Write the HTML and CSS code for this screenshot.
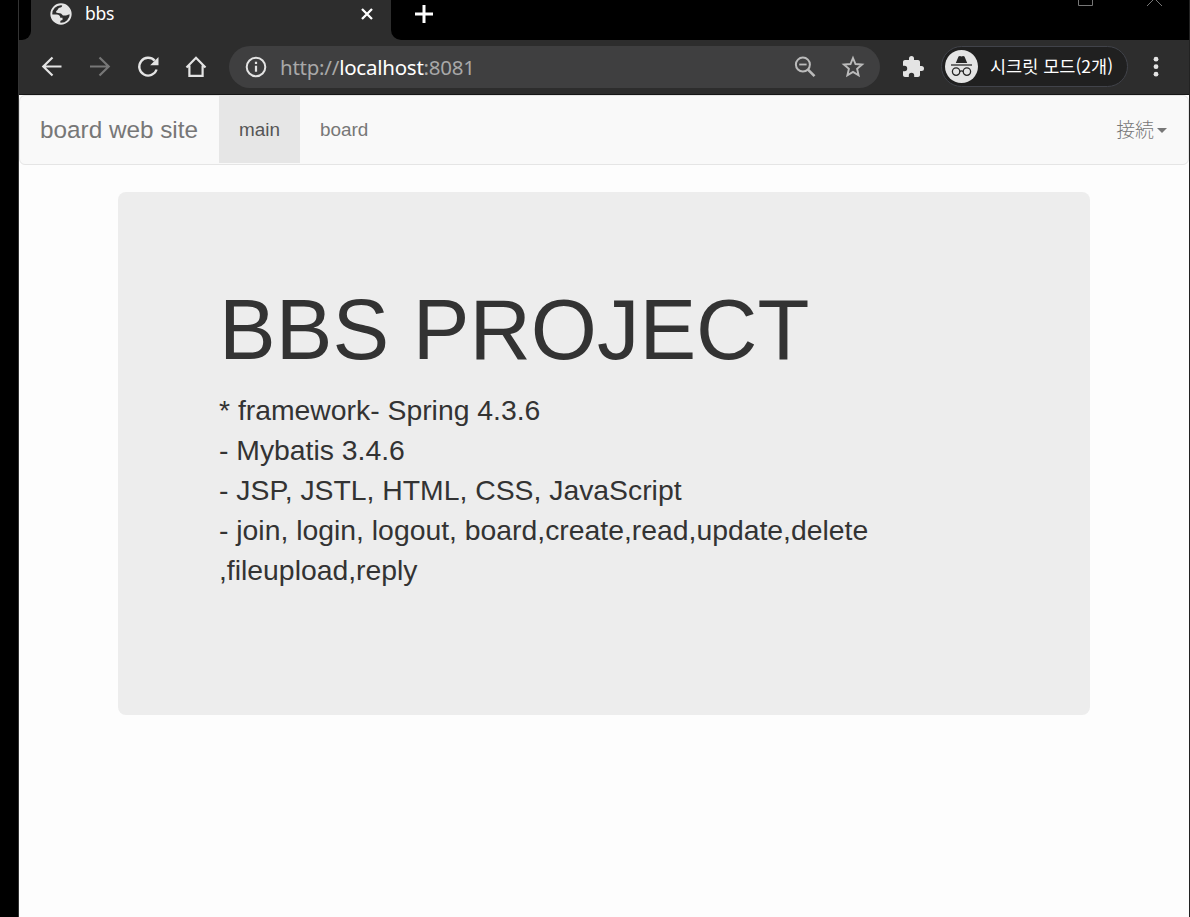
FILE: index.html
```
<!DOCTYPE html>
<html lang="ko">
<head>
<meta charset="utf-8">
<title>bbs</title>
<link rel="stylesheet" href="styles.css">
</head>
<body>
<div class="window">
  <div class="tabstrip">
    <div class="strip-start"></div>
    <div class="tab">
      <svg class="globe" width="22" height="22" viewBox="0 0 22 22"><circle cx="11" cy="11" r="9.700" fill="#2d2d2d" stroke="#e4e4e4" stroke-width="1.900"/><path d="M12.200 1.600C12.600 4 11 4.600 9.400 4.800c-1.500.3-1.300 2-2.400 2.600-1.200.6-1.200 1.900-.2 2.400 1.500.7 4.300.1 5.200 1.700.7 1.300 2.300 1.200 3.800 1 1.900-.2 2.400-1.300 4.600-1.300C20.400 6.500 17 2.300 12.200 1.600zM1.600 11.500h5.200c2.200 0 3.500 1.300 3.500 3.300h2.200v2.300c-1.400.2-2.200.8-2.200 1.700v1.900C5.500 20.300 1.700 16.500 1.600 11.500z" fill="#e4e4e4"/></svg>
      <span class="tab-title">bbs</span>
      <svg class="tab-close" width="12" height="12" viewBox="0 0 12 12"><path d="M1 1l10 10M11 1L1 11" stroke="#fff" stroke-width="2.300" fill="none"/></svg>
    </div>
    <div class="strip-rest">
      <svg class="new-tab" width="18" height="18" viewBox="0 0 18 18"><path d="M9 0v18M0 9h18" stroke="#fff" stroke-width="3"/></svg>
      <div class="window-buttons">
        <svg width="15" height="6" viewBox="0 0 15 6"><path d="M.5 0v5.500h14V0" fill="none" stroke="#777"/></svg>
        <svg width="15" height="6" viewBox="0 0 15 6"><path d="M0 6L7.500-1.500 15 6" fill="none" stroke="#777"/></svg>
      </div>
    </div>
  </div>
  <div class="toolbar">
    <div class="nav-icons">
      <svg width="24" height="24" viewBox="0 0 24 24" fill="none" stroke="#e4e4e4" stroke-width="2.200"><path d="M21.500 11.500H3.500M12.500 2.500L3.300 11.500l9.200 9"/></svg>
      <svg width="24" height="24" viewBox="0 0 24 24" fill="none" stroke="#777" stroke-width="2.200"><path d="M2 11.500h18M11.500 2.500l9.200 9-9.200 9"/></svg>
      <svg width="24" height="24" viewBox="0 0 24 24"><path d="M18.700 5.600A8.900 8.900 0 1 0 20.600 14.500" fill="none" stroke="#e4e4e4" stroke-width="2.300"/><path d="M22.500 2v8.300h-8.300z" fill="#e4e4e4"/></svg>
      <svg width="24" height="24" viewBox="0 0 24 24" fill="none" stroke="#e4e4e4" stroke-width="2.200"><path d="M2.500 12.500L12 2.800 21.500 12.500M5.400 10.500v10.400h13.200V10.500"/></svg>
    </div>
    <div class="address">
      <svg class="info" width="22" height="22" viewBox="0 0 22 22"><circle cx="11" cy="11" r="9.300" fill="none" stroke="#e4e4e4" stroke-width="2"/><path d="M11 9.700v6M11 5.800v2.200" stroke="#e4e4e4" stroke-width="2.200"/></svg>
      <span class="url">http://<b>localhost</b>:8081</span>
      <svg class="magnifier" width="22" height="22" viewBox="0 0 22 22" fill="none" stroke="#bbb"><circle cx="8.900" cy="8.600" r="7" stroke-width="2"/><path d="M5.200 8.500h7.400" stroke-width="1.800"/><path d="M14 13.700l6.500 6.500" stroke-width="2.600"/></svg>
      <svg class="star" width="24" height="24" viewBox="0 0 24 24"><path d="M12 3l2.500 6 6.600.5-5 4.300 1.500 6.500L12 16.900l-5.600 3.400L7.900 13.800l-5-4.300 6.600-.5z" fill="none" stroke="#bbb" stroke-width="1.900"/></svg>
    </div>
    <svg class="extensions" width="24" height="24" viewBox="0 0 24 24"><path d="M20.500 11H19V7c0-1.100-.9-2-2-2h-4V3.500a2.500 2.500 0 0 0-5 0V5H4c-1.100 0-2 .9-2 2v3.800h1.500a2.700 2.700 0 0 1 0 5.400H2V20c0 1.100.9 2 2 2h3.800v-1.500a2.700 2.700 0 0 1 5.400 0V22H17c1.100 0 2-.9 2-2v-4h1.500a2.500 2.500 0 0 0 0-5z" fill="#e4e4e4"/></svg>
    <div class="incognito">
      <svg width="33" height="33" viewBox="0 0 33 33"><circle cx="16.500" cy="16.500" r="16.500" fill="#e4e4e4"/><path d="M10.800 12.900l2.700-6.400 1.400-.6 1.600.7 1.600-.7 1.400.6 2.700 6.400z" fill="#262626"/><path d="M6 15h21" stroke="#444" stroke-width="1.500"/><g fill="none" stroke="#262626" stroke-width="1.300"><circle cx="11.100" cy="21.600" r="3.700"/><circle cx="21.900" cy="21.600" r="3.700"/><path d="M14.700 21.600q1.800-1.500 3.600 0"/></g></svg>
      <span>시크릿 모드(2개)</span>
    </div>
    <svg class="kebab" width="6" height="22" viewBox="0 0 6 22" fill="#e4e4e4"><circle cx="3" cy="3.200" r="2.400"/><circle cx="3" cy="10.700" r="2.400"/><circle cx="3" cy="18.200" r="2.400"/></svg>
  </div>
  <main class="page">
    <nav class="navbar">
      <a class="brand">board web site</a>
      <a class="nav-link active">main</a>
      <a class="nav-link">board</a>
      <a class="dropdown">接続<span class="caret"></span></a>
    </nav>
    <section class="jumbotron">
      <h1>BBS PROJECT</h1>
      <p>* framework- Spring 4.3.6<br>- Mybatis 3.4.6<br>- JSP, JSTL, HTML, CSS, JavaScript<br>- join, login, logout, board,create,read,update,delete<br>,fileupload,reply</p>
    </section>
  </main>
</div>
</body>
</html>
```
FILE: styles.css
```
* { box-sizing: border-box; }
body { margin: 0; background: #000; overflow: hidden; }
svg { display: block; flex: none; }
.window {
  margin-left: 18px;
  height: 917px;
  border-left: 1px solid #333;
  border-right: 1px solid #222;
  display: flex;
  flex-direction: column;
  background: #2d2d2d;
}
.tabstrip { display: flex; height: 40px; flex: none; }
.strip-start { width: 12px; background: #000; border-bottom-right-radius: 9px; }
.tab {
  width: 360px;
  padding: 0 18px 12px 19px;
  display: flex;
  align-items: center;
  color: #fff;
  font: 17.5px/22px "Noto Sans", sans-serif;
}
.tab-title { margin: -2px 0 0 13px; letter-spacing: -0.3px; }
.tab-close { margin-left: auto; }
.strip-rest {
  flex: 1;
  display: flex;
  justify-content: space-between;
  align-items: flex-start;
  padding: 0 27px 0 24px;
  background: #000;
  border-bottom-left-radius: 10px;
}
.new-tab { margin-top: 5px; }
.window-buttons { display: flex; gap: 54px; }
.toolbar {
  height: 55px;
  flex: none;
  display: flex;
  align-items: center;
  border-bottom: 1px solid #161616;
}
.nav-icons { display: flex; gap: 24px; margin-left: 21px; }
.address {
  width: 651px;
  height: 42px;
  margin-left: 21px;
  padding: 0 15px 0 16px;
  border-radius: 21px;
  background: #3f3f40;
  display: flex;
  align-items: center;
}
.url {
  margin-left: 13px;
  color: #a8a8a8;
  font: 20.5px/30px "Noto Sans", sans-serif;
  letter-spacing: -0.24px;
  white-space: nowrap;
}
.url b { font-weight: 400; color: #fff; }
.magnifier { margin-left: auto; }
.star { margin-left: 25px; }
.extensions { margin-left: 21px; }
.incognito {
  width: 187px;
  height: 41px;
  margin: -1px 0 0 16px;
  padding-left: 3px;
  border: 1px solid #41434a;
  border-radius: 21px;
  background: #202020;
  display: flex;
  align-items: center;
  color: #fff;
  font: 17.5px/26px "Noto Sans CJK KR", sans-serif;
  white-space: nowrap;
}
.incognito span { margin: -1px 0 0 12px; }
.kebab { margin-left: 25px; }
.page {
  flex: 1;
  background: #fdfdfd;
  font-family: "Liberation Sans", Arial, sans-serif;
}
.navbar {
  height: 70px;
  display: flex;
  align-items: center;
  padding-left: 20px;
  padding-right: 21px;
  border: 1px solid #e5e5e5;
  border-radius: 6px;
  background: #f9f9f9;
  color: #777;
  font-size: 18.9px;
}
.brand { width: 179px; font-size: 24.3px; }
.nav-link { height: 67px; line-height: 67px; padding: 0 20px; margin-bottom: 1px; }
.active { background: #e6e6e6; color: #555; }
.dropdown {
  margin: -4px 0 0 auto;
  display: flex;
  align-items: center;
  font-family: "Noto Sans CJK JP", sans-serif;
  font-weight: 300;
}
.caret {
  margin: 4px 0 0 3px;
  border: 5px solid transparent;
  border-top-color: #777;
  border-bottom: 0;
}
.jumbotron {
  width: 972px;
  height: 523px;
  margin: 27px 0 0 99px;
  padding: 91px 101px 0;
  border-radius: 8px;
  background: #ededed;
  color: #333;
}
.jumbotron h1 { margin: 0; font-size: 85px; line-height: 94px; font-weight: 400; }
.jumbotron p { margin: 13px 0 0; font-size: 28.35px; line-height: 40px; white-space: nowrap; }
```
